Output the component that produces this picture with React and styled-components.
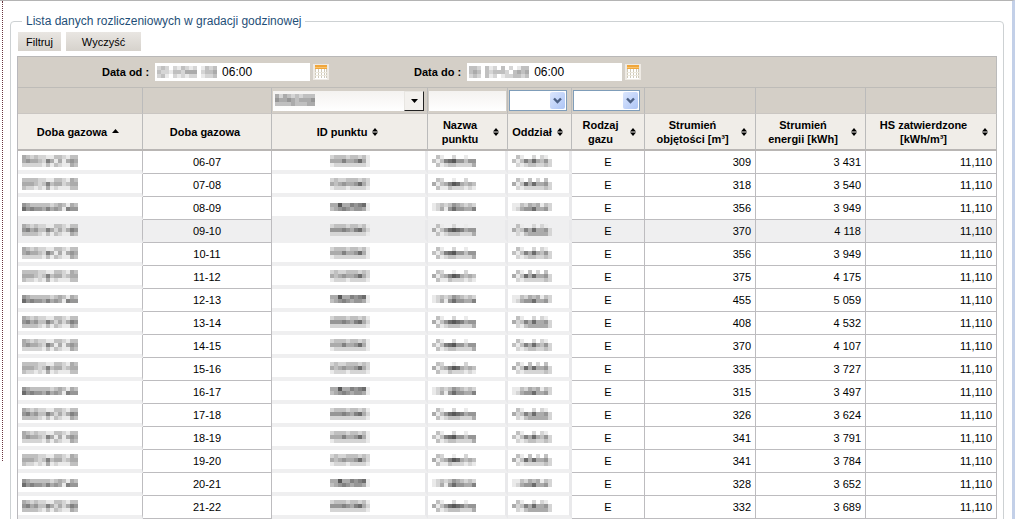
import React, { useState } from 'react';
import styled, { createGlobalStyle } from 'styled-components';

const GlobalStyle = createGlobalStyle`
  * {
    box-sizing: border-box;
  }

  body {
    margin: 0;
    background-color: #fff;
    color: #000;
    font-family: 'Liberation Sans', Arial, sans-serif;
    font-size: 11px;
  }
`;

// Styled Components
const Page = styled.div`
  display: flex;
  height: 100vh;
  overflow: hidden;
  border-top: 1px solid #b4b4b4;
  border-right: 3px solid #c3d0e8;
`;

const DottedEdge = styled.div`
  width: 3px;
  height: calc(100% - 58px);
  border-right: 1px dotted #6a3540;
  flex-shrink: 0;
`;

const Content = styled.main`
  flex: 1;
  min-width: 0;
  padding: 13px 8px 0 7px;
`;

const Panel = styled.fieldset`
  min-width: 0;
  margin: 0;
  padding: 4px 6px 24px;
  border: 1px solid #cdd1d3;
  border-radius: 4px;
`;

const PanelTitle = styled.legend`
  padding: 0 4px;
  margin-left: 5px;
  color: #1f4f78;
  font-size: 12px;
  line-height: 14px;
`;

const Toolbar = styled.div`
  display: flex;
  gap: 5px;
  margin-bottom: 5px;
  padding-left: 1px;
`;

const Button = styled.button`
  width: ${(props) => (props.$wide ? '75px' : '43px')};
  height: 19px;
  padding: 0;
  border: 0;
  background: linear-gradient(#e9e6e2, #d6d2cc);
  color: #000;
  font: inherit;
`;

const Table = styled.table`
  width: 100%;
  table-layout: fixed;
  border-collapse: separate;
  border-spacing: 0;
  border-top: 1px solid #b9b8b8;
  border-left: 1px solid #b9b8bc;
`;

const DatesCell = styled.td`
  height: 31px;
  padding: 0 0 0 84px;
  background-color: #d4cfc7;
  border-right: 1px solid #bbb;
  border-bottom: 1px solid #bebcb8;
`;

const Dates = styled.div`
  display: flex;
  align-items: center;
  gap: 85px;
`;

const DateField = styled.div`
  display: flex;
  align-items: center;

  label {
    margin-right: 6px;
    font-weight: bold;
    white-space: nowrap;
  }
`;

const InputBox = styled.div`
  position: relative;
  display: flex;
  flex: 1;
  min-width: 0;

  svg {
    position: absolute;
    top: 3px;
    left: 2px;
    pointer-events: none;
  }
`;

const DateInput = styled.input`
  width: 155px;
  height: 18px;
  padding: 0 0 0 67px;
  border: 0;
  background-color: #fff;
  font-family: inherit;
  font-size: 12px;
`;

const CalendarButton = styled.button`
  display: flex;
  margin-left: 3px;
  padding: 0;
  border: 0;
  background: none;
`;

const FilterCell = styled.td`
  height: 25px;
  padding: 0 1px;
  background-color: #d4cfc7;
  border-right: 1px solid #bbb;
`;

const Combo = styled.div`
  display: flex;
  margin-right: 2px;
`;

const TextFilter = styled.input`
  flex: 1;
  width: 100%;
  min-width: 0;
  height: 20px;
  display: block;
  border: 0;
  background: linear-gradient(#f4f2f0, #fff);
  font: inherit;
`;

const ComboButton = styled.button`
  display: flex;
  align-items: center;
  justify-content: center;
  width: 20px;
  height: 20px;
  padding: 0;
  background-color: #f3f1ee;
  border: 1px solid;
  border-color: #e8e6e2 #222 #222 #e8e6e2;
`;

const SelectBox = styled.div`
  position: relative;
  margin-right: 3px;

  svg {
    position: absolute;
    top: 2px;
    right: 1px;
    pointer-events: none;
  }
`;

const Select = styled.select`
  display: block;
  appearance: none;
  width: 100%;
  height: 21px;
  border: 1px solid #7f9db9;
  border-radius: 0;
  background-color: #fff;
  font: inherit;
`;

const HeadCell = styled.th`
  height: 38px;
  padding: 0 8px 0 4px;
  background-color: #f0ede8;
  border-top: 1px solid #cac6c2;
  border-right: 1px solid #bbb;
  border-bottom: 2px solid #b9b6b4;
  line-height: 14px;
`;

const HeadContent = styled.div`
  display: flex;
  align-items: center;
  justify-content: center;
  gap: 5px;

  span {
    flex: ${(props) => (props.$stacked ? '1' : 'none')};
  }

  svg {
    flex-shrink: 0;
  }
`;

const Row = styled.tr`
  background-color: ${(props) => (props.$active ? '#efeff0' : '#fff')};
`;

const Cell = styled.td`
  height: 23px;
  padding: 0 4px;
  border-right: 1px solid #bdbcbf;
  border-bottom: 1px solid #bdbcbf;
  line-height: 14px;
  text-align: ${(props) => props.$align || 'center'};
`;

const MaskedCell = styled(Cell)`
  padding: 0 1px 0 4px;
  border-right: ${(props) => (props.$sharp ? '1px solid #bdbcbf' : '3px solid #e9e9eb')};
  border-bottom: 4px solid #efeff0;

  svg {
    display: block;
    margin: ${(props) => (props.$align === 'left' ? '0' : '0 auto')};
  }
`;

// Each digit is the darkness of one 4px block, a space is an empty block
const MASKS = {
  day: [
    ['43232211332133', '45443264141454', '22222131321143'],
    ['33332211332143', '44432363442344', '32212141211133'],
    ['54333332343143', '75655464541655'],
    ['43232211332133', '56453364242465', '33332131321143'],
  ],
  id: [
    ['2333233231', '4446445741', '1222222221'],
    ['2322333232', '4345445742', '1222122221'],
    ['4484465671', '3456545541'],
    ['2333233231', '5556546742', '2222222221'],
  ],
  name: [
    [' 31  2  1  ', '31367855355', ' 3123322224'],
    [' 32  1  2  ', '41346874343', ' 3113222121'],
    ['12323543232', '12415755446'],
    [' 31  2  1  ', '41357876455', ' 3123332224'],
  ],
  branch: [
    [' 31  2 21 ', '3136474352', ' 212332232'],
    [' 31 3 2 3 ', '4137474452', ' 212222232'],
    ['1132434132', '1245574452'],
    [' 31  2 21 ', '4236474452', ' 213444442'],
  ],
  from: [['232 213212 1323', '3221332444 2334', '231 212122 1223']],
  to: [['332 312 3 2 133', '343 323332 3434', '232 312 1223323']],
  point: [['4243232333', '5445434445', '3333433344']],
};

const Mask = ({ name, variant = 0 }) => {
  const lines = MASKS[name][variant];
  return (
    <svg
      width={lines[0].length * 4}
      height={lines.length * 4}
      shapeRendering="crispEdges"
      aria-hidden="true"
    >
      {lines.map((line, y) =>
        [...line].map((level, x) => {
          const tone = 255 - Number(level) * 21;
          return level === ' ' ? null : (
            <rect key={`${x}-${y}`} x={x * 4} y={y * 4} width="4" height="4" fill={`rgb(${tone},${tone},${tone})`} />
          );
        })
      )}
    </svg>
  );
};

const SortIcon = ({ ascending }) =>
  ascending ? (
    <svg width="7" height="8" aria-hidden="true">
      <path d="M0 5 L3.5 1 L7 5 Z" />
    </svg>
  ) : (
    <svg width="6" height="8" aria-hidden="true">
      <path d="M0 3.4 L3 0 L6 3.4 Z M0 4.6 L3 8 L6 4.6 Z" />
    </svg>
  );

const CalendarIcon = () => (
  <svg width="16" height="16" shapeRendering="crispEdges" aria-hidden="true">
    <rect width="16" height="16" fill="#eeeae4" />
    <rect x="2" y="2" width="12" height="13" fill="#fff" />
    <rect x="2" y="1" width="12" height="4" fill="#f0a63c" />
    <rect x="2" y="3" width="12" height="1" fill="#f8c470" />
    <path d="M2.5 5v9 M5.5 5v9 M8.5 5v9 M11.5 5v9 M13.5 5v9" stroke="#cfcabb" />
    <path d="M2 8.5h12 M2 11.5h12" stroke="#ece8dc" />
  </svg>
);

const SelectArrow = () => (
  <svg width="16" height="17" aria-hidden="true">
    <defs>
      <linearGradient id="arrowFill" x2="1" y2="1">
        <stop offset="0" stopColor="#dbe6fd" />
        <stop offset="1" stopColor="#adc5f6" />
      </linearGradient>
    </defs>
    <rect width="15" height="17" rx="2" fill="url(#arrowFill)" />
    <path d="M4 6.5 L7.5 10 L11 6.5" fill="none" stroke="#4d6185" strokeWidth="2.4" />
  </svg>
);

const widths = [125, 129, 156, 80, 64, 73, 111, 110, 131];

const headers = [
  { lines: ['Doba gazowa'], sort: 'asc' },
  { lines: ['Doba gazowa'] },
  { lines: ['ID punktu'], sort: 'both' },
  { lines: ['Nazwa', 'punktu'], sort: 'both' },
  { lines: ['Oddział'], sort: 'both' },
  { lines: ['Rodzaj', 'gazu'], sort: 'both' },
  { lines: ['Strumień', 'objętości [m³]'], sort: 'both' },
  { lines: ['Strumień', 'energii [kWh]'], sort: 'both' },
  { lines: ['HS zatwierdzone', '[kWh/m³]'], sort: 'both' },
];

const rows = [
  ['06-07', '309', '3 431'],
  ['07-08', '318', '3 540'],
  ['08-09', '356', '3 949'],
  ['09-10', '370', '4 118'],
  ['10-11', '356', '3 949'],
  ['11-12', '375', '4 175'],
  ['12-13', '455', '5 059'],
  ['13-14', '408', '4 532'],
  ['14-15', '370', '4 107'],
  ['15-16', '335', '3 727'],
  ['16-17', '315', '3 497'],
  ['17-18', '326', '3 624'],
  ['18-19', '341', '3 791'],
  ['19-20', '341', '3 784'],
  ['20-21', '328', '3 652'],
  ['21-22', '332', '3 689'],
];

const DateFilter = ({ id, label, mask }) => {
  const [value, setValue] = useState('06:00');
  return (
    <DateField>
      <label htmlFor={id}>{label}</label>
      <InputBox>
        <DateInput id={id} value={value} onChange={(e) => setValue(e.target.value)} />
        <Mask name={mask} />
      </InputBox>
      <CalendarButton type="button">
        <CalendarIcon />
      </CalendarButton>
    </DateField>
  );
};

const SelectFilter = ({ label }) => (
  <SelectBox>
    <Select aria-label={label}>
      <option value="" />
    </Select>
    <SelectArrow />
  </SelectBox>
);

const App = () => {
  return (
    <>
      <GlobalStyle />
      <Page>
        <DottedEdge />
        <Content>
          <Panel>
            <PanelTitle>Lista danych rozliczeniowych w gradacji godzinowej</PanelTitle>
            <Toolbar>
              <Button type="button">Filtruj</Button>
              <Button type="button" $wide>Wyczyść</Button>
            </Toolbar>

            <Table>
              <colgroup>
                {widths.map((width, i) => (
                  <col key={i} width={width} />
                ))}
              </colgroup>
              <thead>
                {/* Date range */}
                <tr>
                  <DatesCell colSpan={9}>
                    <Dates>
                      <DateFilter id="date-from" label="Data od :" mask="from" />
                      <DateFilter id="date-to" label="Data do :" mask="to" />
                    </Dates>
                  </DatesCell>
                </tr>

                {/* Column filters */}
                <tr>
                  <FilterCell />
                  <FilterCell />
                  <FilterCell>
                    <Combo>
                      <InputBox>
                        <TextFilter aria-label="ID punktu" />
                        <Mask name="point" />
                      </InputBox>
                      <ComboButton type="button">
                        <svg width="7" height="4" aria-hidden="true">
                          <path d="M0 0 H7 L3.5 4 Z" />
                        </svg>
                      </ComboButton>
                    </Combo>
                  </FilterCell>
                  <FilterCell>
                    <TextFilter aria-label="Nazwa punktu" />
                  </FilterCell>
                  <FilterCell>
                    <SelectFilter label="Oddział" />
                  </FilterCell>
                  <FilterCell>
                    <SelectFilter label="Rodzaj gazu" />
                  </FilterCell>
                  <FilterCell />
                  <FilterCell />
                  <FilterCell />
                </tr>

                {/* Column names */}
                <tr>
                  {headers.map(({ lines, sort }, i) => (
                    <HeadCell key={i} scope="col">
                      <HeadContent $stacked={lines.length > 1}>
                        <span>
                          {lines[0]}
                          {lines[1] && <br />}
                          {lines[1]}
                        </span>
                        {sort && <SortIcon ascending={sort === 'asc'} />}
                      </HeadContent>
                    </HeadCell>
                  ))}
                </tr>
              </thead>
              <tbody>
                {rows.map(([hour, volume, energy], i) => (
                  <Row key={hour} $active={hour === '09-10'}>
                    <MaskedCell $align="left" $sharp><Mask name="day" variant={i % 4} /></MaskedCell>
                    <Cell>{hour}</Cell>
                    <MaskedCell><Mask name="id" variant={i % 4} /></MaskedCell>
                    <MaskedCell $align="left"><Mask name="name" variant={i % 4} /></MaskedCell>
                    <MaskedCell $align="left"><Mask name="branch" variant={i % 4} /></MaskedCell>
                    <Cell>E</Cell>
                    <Cell $align="right">{volume}</Cell>
                    <Cell $align="right">{energy}</Cell>
                    <Cell $align="right">11,110</Cell>
                  </Row>
                ))}
              </tbody>
            </Table>
          </Panel>
        </Content>
      </Page>
    </>
  );
};

export default App;
